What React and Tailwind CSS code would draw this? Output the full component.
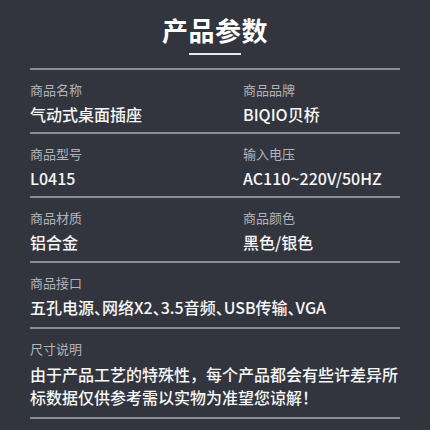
import React from "react";

const rows = [
  [
    { label: "商品名称", value: "气动式桌面插座" },
    { label: "商品品牌", value: "BIQIO贝桥" },
  ],
  [
    { label: "商品型号", value: "L0415" },
    { label: "输入电压", value: "AC110~220V/50HZ" },
  ],
  [
    { label: "商品材质", value: "铝合金" },
    { label: "商品颜色", value: "黑色/银色" },
  ],
];

function Field({ label, value, tight }) {
  return (
    <div>
      <div className="text-[13px] leading-[20px] text-[#b3b4bb]">{label}</div>
      <div
        className={
          tight
            ? "mt-[2px] text-[16px] leading-[24px] font-medium text-[#f7f7f7] [font-feature-settings:'halt']"
            : "mt-[2px] text-[16px] leading-[24px] font-medium text-[#f7f7f7]"
        }
      >
        {value}
      </div>
    </div>
  );
}

export default function App() {
  return (
    <div
      className="w-[430px] h-[430px] overflow-hidden bg-[#32343e] px-[30px] pt-[14px]"
      style={{ fontFamily: '"Noto Sans CJK SC", "Noto Sans", sans-serif' }}
    >
      {/* TITLE */}
      <div className="flex flex-col items-center">
        <h1 className="text-[26px] leading-[32px] font-bold tracking-[0.5px] text-white">
          产品参数
        </h1>
        <div className="mt-[7px] h-[2px] w-[52px] bg-[#e8e8ea]" />
      </div>

      <div className="mt-[13px] h-[2px] bg-[#8b8d95]" />

      {rows.map((row, i) => (
        <div key={i}>
          <div
            className={
              i === 2
                ? "grid grid-cols-[213px_1fr] pt-[10px] pb-[7px]"
                : "grid grid-cols-[213px_1fr] pt-[10px] pb-[6px]"
            }
          >
            <Field {...row[0]} />
            <Field {...row[1]} />
          </div>
          <div className="h-[2px] bg-[#8b8d95]" />
        </div>
      ))}

      <div className="pt-[10px] pb-[8px]">
        <Field tight label="商品接口" value="五孔电源、网络X2、3.5音频、USB传输、VGA" />
      </div>
      <div className="h-[2px] bg-[#8b8d95]" />

      <div className="pt-[10px] pb-[8px]">
        <div className="text-[13px] leading-[20px] text-[#b3b4bb]">尺寸说明</div>
        <div className="mt-[4px] text-[16px] leading-[23px] font-medium text-[#f7f7f7]">
          由于产品工艺的特殊性，每个产品都会有些许差异所标数据仅供参考需以实物为准望您谅解！
        </div>
      </div>
      <div className="h-[2px] bg-[#8b8d95]" />
    </div>
  );
}
